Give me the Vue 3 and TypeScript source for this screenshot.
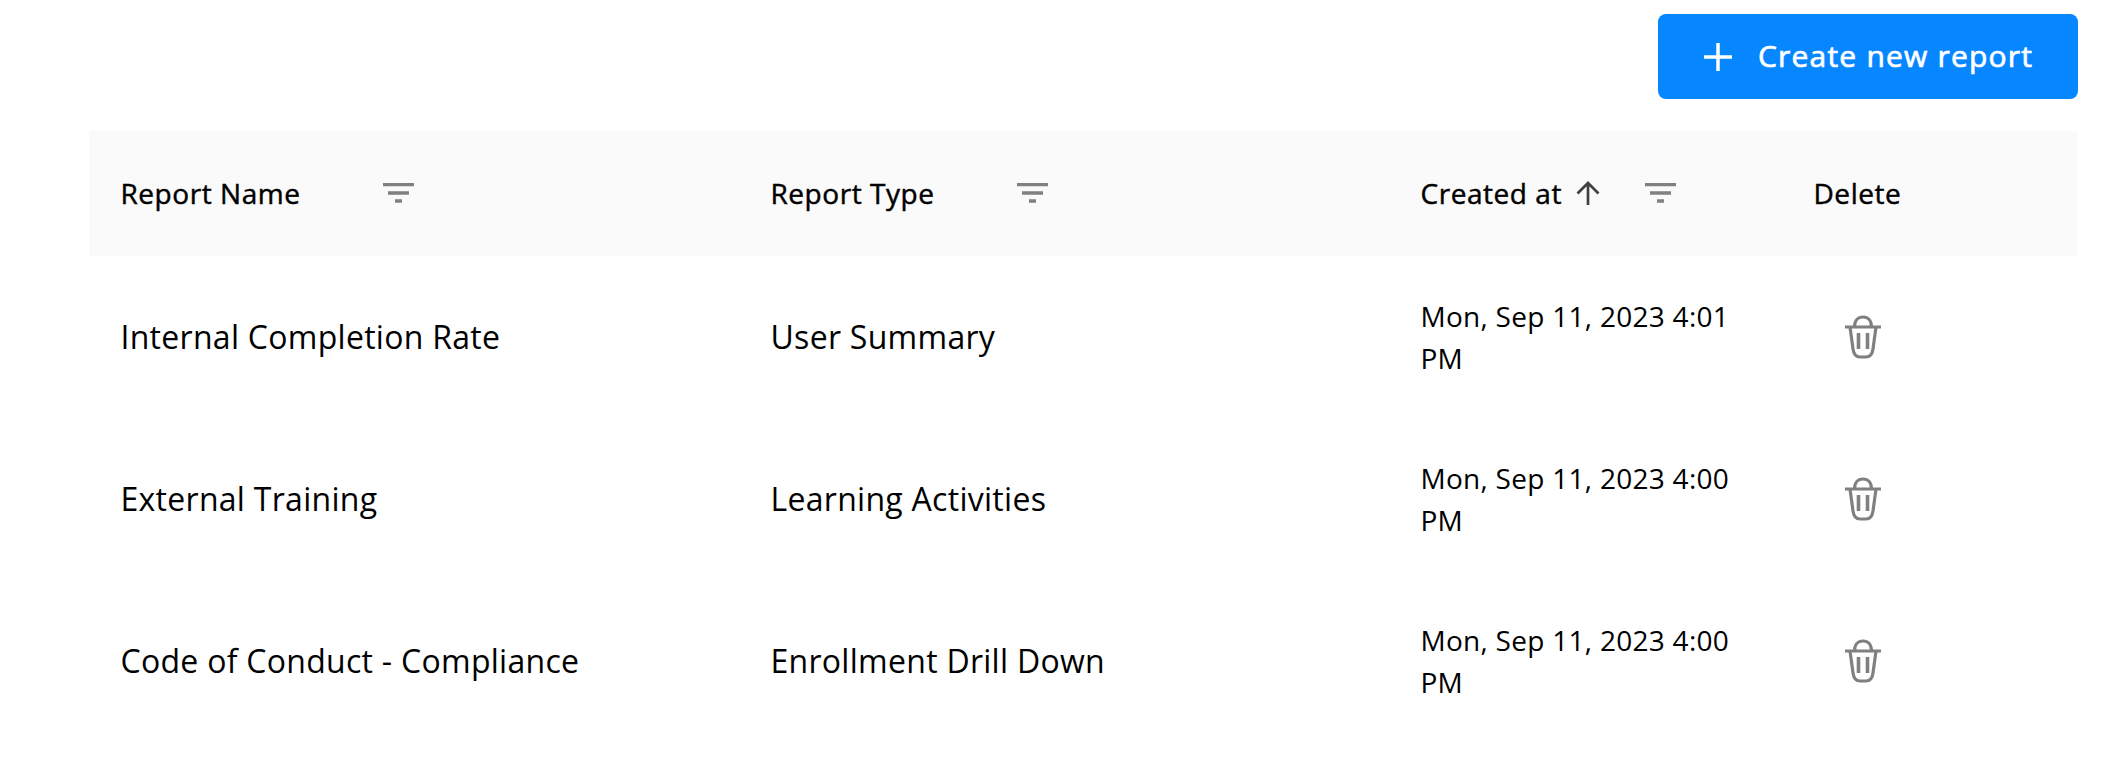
<template>
  <div class="page">
    <div class="toolbar">
      <button class="create-btn" type="button">
        <svg class="plus" viewBox="0 0 28 28" width="28" height="28">
          <path d="M14 0V28M0 14H28" stroke="#fff" stroke-width="3.5" fill="none" />
        </svg>
        <span class="create-label">Create new report</span>
      </button>
    </div>

    <table class="reports">
      <colgroup>
        <col class="col-name" />
        <col class="col-type" />
        <col class="col-date" />
        <col />
      </colgroup>
      <thead>
        <tr>
          <th>
            <div class="head-cell">
              <span class="head-label name-label">Report Name</span>
              <svg class="filter" viewBox="0 0 31 20" width="31" height="20">
                <path d="M0 1.500H31M5 10H26M12 18H19" stroke="#808080" stroke-width="3.500" fill="none" />
              </svg>
            </div>
          </th>
          <th>
            <div class="head-cell">
              <span class="head-label type-label">Report Type</span>
              <svg class="filter" viewBox="0 0 31 20" width="31" height="20">
                <path d="M0 1.500H31M5 10H26M12 18H19" stroke="#808080" stroke-width="3.500" fill="none" />
              </svg>
            </div>
          </th>
          <th>
            <div class="head-cell">
              <span class="head-label">Created at</span>
              <svg class="arrow" viewBox="0 0 24 24" width="24" height="24">
                <path d="M12 24V2M1.500 12.500L12 2L22.500 12.500" stroke="#404040" stroke-width="2.700" fill="none" />
              </svg>
              <svg class="filter date-filter" viewBox="0 0 31 20" width="31" height="20">
                <path d="M0 1.500H31M5 10H26M12 18H19" stroke="#808080" stroke-width="3.500" fill="none" />
              </svg>
            </div>
          </th>
          <th><span class="head-label">Delete</span></th>
        </tr>
      </thead>
      <tbody>
        <tr v-for="report in reports" :key="report.name">
          <td class="big">{{ report.name }}</td>
          <td class="big">{{ report.type }}</td>
          <td class="date">{{ report.created }}</td>
          <td>
            <svg class="trash" viewBox="0 0 36 44" width="36" height="44">
              <g stroke="#808080" stroke-width="3.200" fill="none">
                <path d="M0 12H36" />
                <path d="M9.500 12C9.500 5.500 13 2 18 2C23 2 26.500 5.500 26.500 12" />
                <path d="M5 12L8 34C8.800 40 11 42 15 42H21C25 42 27.200 40 28 34L31 12" />
                <path d="M13.500 18V34M22.500 18V34" stroke-width="3.600" />
              </g>
            </svg>
          </td>
        </tr>
      </tbody>
    </table>
  </div>
</template>

<script setup lang="ts">
interface Report {
  name: string
  type: string
  created: string
}

const reports: Report[] = [
  { name: 'Internal Completion Rate', type: 'User Summary', created: 'Mon, Sep 11, 2023 4:01 PM' },
  { name: 'External Training', type: 'Learning Activities', created: 'Mon, Sep 11, 2023 4:00 PM' },
  { name: 'Code of Conduct - Compliance', type: 'Enrollment Drill Down', created: 'Mon, Sep 11, 2023 4:00 PM' },
]
</script>

<style>
html,
body {
  background: #fff;
}
</style>

<style scoped>
.page {
  width: 2110px;
  height: 774px;
  box-sizing: border-box;
  padding: 14px 32px 0 89px;
  font-family: "Open Sans", "Liberation Sans", sans-serif;
  color: #000;
  overflow: hidden;
}

.toolbar {
  display: flex;
  justify-content: flex-end;
  margin-bottom: 33px;
}

.create-btn {
  display: flex;
  align-items: center;
  gap: 26px;
  width: 420px;
  height: 85px;
  padding: 0 0 0 46px;
  border: 0;
  border-radius: 8px;
  background: #0787ff;
  color: #fff;
  font-family: inherit;
  font-size: 30px;
  font-weight: 400;
  letter-spacing: 1.2px;
  -webkit-text-stroke: 0.7px #fff;
}

.create-label {
  padding-bottom: 2px;
}

.reports {
  width: 1989px;
  margin-top: -1px;
  border-collapse: collapse;
  table-layout: fixed;
}

.col-name,
.col-type {
  width: 650px;
}

.col-date {
  width: 393px;
}

thead tr {
  height: 125px;
  background: #fafafa;
}

th {
  padding: 0 31.500px 2px;
  text-align: left;
  font-size: 28px;
  font-weight: 400;
  letter-spacing: 0.55px;
  -webkit-text-stroke: 0.45px #000;
}

.head-cell {
  display: flex;
  align-items: center;
}

.name-label {
  width: 262.500px;
}

.type-label {
  width: 246px;
}

.arrow {
  margin-left: 14px;
}

.date-filter {
  margin-left: 44.500px;
}

tbody tr {
  height: 162px;
}

td {
  padding: 0 31.500px;
  vertical-align: middle;
}

.big {
  padding-bottom: 2px;
  font-size: 32px;
  letter-spacing: 0.28px;
}

.date {
  font-size: 28px;
  line-height: 42px;
  letter-spacing: 0.28px;
}

.trash {
  display: block;
  margin-left: 31px;
}
</style>
